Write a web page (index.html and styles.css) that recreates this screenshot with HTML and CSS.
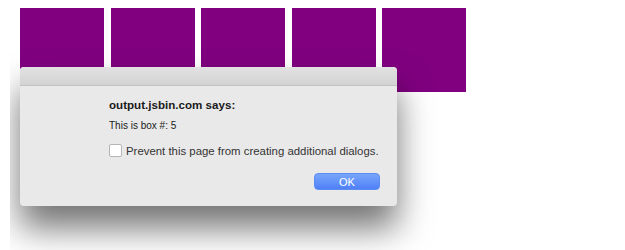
FILE: index.html
```html
<!DOCTYPE html>
<html lang="en">
<head>
    <meta charset="UTF-8">
    <title>JS Bin Output</title>
    <link rel="stylesheet" href="styles.css">
</head>
<body>
    <div class="boxes">
        <div class="box"></div>
        <div class="box"></div>
        <div class="box"></div>
        <div class="box"></div>
        <div class="box"></div>
    </div>

    <!-- alert dialog -->
    <div class="dialog">
        <div class="dialog-titlebar"></div>
        <div class="dialog-body">
            <h2 class="dialog-title">output.jsbin.com says:</h2>
            <p class="dialog-message">This is box #: 5</p>
            <label class="dialog-check">
                <span class="checkbox"></span>
                Prevent this page from creating additional dialogs.
            </label>
            <div class="dialog-actions">
                <button class="ok-button">OK</button>
            </div>
        </div>
    </div>
</body>
</html>
```

FILE: styles.css
```css
body {
    margin: 0;
    padding: 8px 0 0 20px;
    background: white;
    font-family: "Liberation Sans", Arial, sans-serif;
}

.boxes {
    display: flex;
    gap: 6.5px;
}

.box {
    width: 84px;
    height: 84px;
    background: #800080;
}

.dialog {
    position: absolute;
    left: 20px;
    top: 67px;
    width: 377px;
    height: 139px;
    background: #e9e9e9;
    border-radius: 4px;
    box-shadow: 0 22px 34px rgba(0, 0, 0, 0.55);
    clip-path: inset(-20px -80px -60px -10px);
    overflow: hidden;
}

.dialog-titlebar {
    height: 18px;
    background: linear-gradient(to bottom, #e2e2e2, #d3d3d3);
    border-bottom: 1px solid #c2c2c2;
}

.dialog-body {
    padding: 12px 17px 0 89px;
}

.dialog-title {
    margin: 0;
    font-size: 11.6px;
    font-weight: bold;
    color: #1a1a1a;
}

.dialog-message {
    margin: 9px 0 0;
    font-size: 10px;
    color: #1a1a1a;
}

.dialog-check {
    display: flex;
    align-items: center;
    gap: 4px;
    margin-top: 13px;
    font-size: 11.4px;
    white-space: nowrap;
    color: #333;
}

.checkbox {
    flex: none;
    width: 11px;
    height: 11px;
    background: white;
    border: 1px solid #b5b5b5;
    border-radius: 2px;
}

.dialog-actions {
    display: flex;
    justify-content: flex-end;
    margin-top: 16px;
}

.ok-button {
    width: 66px;
    height: 17px;
    padding: 0;
    border: 1px solid #5d8cf0;
    border-radius: 4px;
    background: linear-gradient(to bottom, #78a6fb, #4f80f7);
    color: white;
    font-family: "Liberation Sans", Arial, sans-serif;
    font-size: 11px;
}
```
